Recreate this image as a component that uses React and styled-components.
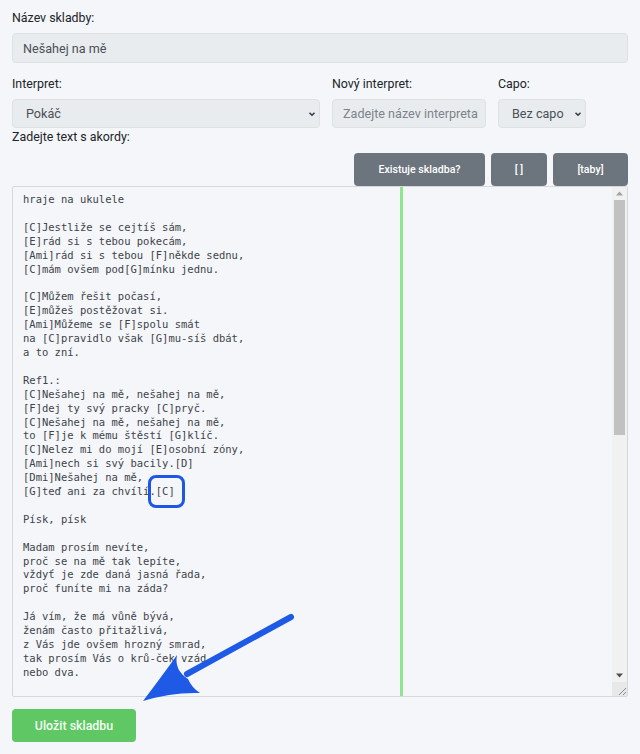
import React from "react";
import styled, { createGlobalStyle } from "styled-components";

const Global = createGlobalStyle`
  html, body { margin: 0; padding: 0; background: #f4f6fa; }
  body { font-family: Roboto, "Noto Sans", Arial, sans-serif; color: #212529; }
  * { box-sizing: border-box; }
`;

const Page = styled.div`
  position: relative;
  width: 640px;
  height: 754px;
  padding: 8px 12px 0 12px;
  overflow: hidden;
`;

const Label = styled.div`
  font-size: 12.4px;
  line-height: ${p => p.$lh || "19px"};
  color: #212529;
  margin-top: ${p => p.$mt || "0px"};
  margin-bottom: ${p => p.$mb || "0px"};
  white-space: nowrap;
`;

const Input = styled.div`
  height: ${p => p.$h || "30px"};
  width: ${p => p.$w || "100%"};
  background: #e9ecef;
  border: 1px solid #dde1e6;
  border-radius: 4px;
  padding: 0 10px;
  display: flex;
  align-items: center;
  font-size: 12.6px;
  color: ${p => (p.$placeholder ? "#7b838b" : "#495057")};
  white-space: nowrap;
  overflow: hidden;
`;

const Select = styled(Input)`
  justify-content: space-between;
  padding: 0 3px 0 13px;
`;

const Chevron = () => (
  <svg width="8" height="6" viewBox="0 0 8 6">
    <path d="M1.5 1.8 L4 4.3 L6.5 1.8" fill="none" stroke="#343a40" strokeWidth="1.5" />
  </svg>
);

const Row = styled.div`
  display: flex;
  gap: 12px;
  margin-top: 11px;
`;

const Field = styled.div`
  display: flex;
  flex-direction: column;
  width: ${p => p.$w};
`;

const Toolbar = styled.div`
  display: flex;
  justify-content: flex-end;
  gap: 6px;
  margin-top: 7px;
`;

const GrayButton = styled.div`
  height: 33px;
  width: ${p => p.$w};
  background: #6c757d;
  color: #fff;
  border-radius: 4px;
  display: flex;
  align-items: center;
  justify-content: center;
  font-size: 10.6px;
  font-weight: 500;
`;

const Editor = styled.div`
  display: flex;
  height: 511px;
  border: 1px solid #d5d9de;
  border-radius: 2px;
  background: #f4f6fa;
`;

const Content = styled.div`
  position: relative;
  flex: 1;
  overflow: hidden;
  padding: 6px 0 0 10px;
`;

const Lyrics = styled.pre`
  margin: 0;
  font-family: "DejaVu Sans Mono", "Liberation Mono", monospace;
  font-size: 10.5px;
  line-height: 13.9px;
  color: #3e4449;
`;

const Guide = styled.div`
  position: absolute;
  top: 0;
  bottom: 0;
  left: 387px;
  width: 3px;
  background: #90e690;
`;

const Mark = styled.span`
  position: relative;
  &::after {
    content: "";
    position: absolute;
    left: -8px;
    right: -10px;
    top: -10px;
    bottom: -11px;
    border: 3px solid #1d57e3;
    border-radius: 8px;
  }
`;

const ScrollCol = styled.div`
  width: 15px;
  display: flex;
  flex-direction: column;
  background: #f1f1f1;
`;

const ScrollBtn = styled.div`
  height: 13px;
  display: flex;
  align-items: center;
  justify-content: center;
`;

const Track = styled.div`
  flex: 1;
  padding: 0 2px;
  display: flex;
  flex-direction: column;
`;

const Thumb = styled.div`
  height: 235px;
  background: #c1c1c1;
`;

const Resizer = styled.div`
  height: 14px;
  background: #e8e8e8;
  display: flex;
  align-items: flex-end;
  justify-content: flex-end;
`;

const SaveButton = styled.div`
  margin-top: 12px;
  width: 124px;
  height: 33px;
  border-radius: 4px;
  background: #5fc764;
  color: #f3fff3;
  display: flex;
  align-items: center;
  justify-content: center;
  font-size: 12.4px;
  font-weight: 500;
`;

const Overlay = styled.svg`
  position: absolute;
  left: 0;
  top: 0;
  pointer-events: none;
`;

const before = `hraje na ukulele

[C]Jestliže se cejtíš sám,
[E]rád si s tebou pokecám,
[Ami]rád si s tebou [F]někde sednu,
[C]mám ovšem pod[G]mínku jednu.

[C]Můžem řešit počasí,
[E]můžeš postěžovat si.
[Ami]Můžeme se [F]spolu smát
na [C]pravidlo však [G]mu-síš dbát,
a to zní.

Ref1.:
[C]Nešahej na mě, nešahej na mě,
[F]dej ty svý pracky [C]pryč.
[C]Nešahej na mě, nešahej na mě,
to [F]je k mému štěstí [G]klíč.
[C]Nelez mi do mojí [E]osobní zóny,
[Ami]nech si svý bacily.[D]
[Dmi]Nešahej na mě,
[G]teď ani za chvílí.`;

const after = `

Písk, písk

Madam prosím nevíte,
proč se na mě tak lepíte,
vždyť je zde daná jasná řada,
proč funíte mi na záda?

Já vím, že má vůně bývá,
ženám často přitažlivá,
z Vás jde ovšem hrozný smrad,
tak prosím Vás o krů-ček vzád
nebo dva.

Ref1.:`;

export default function App() {
  return (
    <>
      <Global />
      <Page>
        <Label $mb="6px">Název skladby:</Label>
        <Input>Nešahej na mě</Input>
        <Row>
          <Field $w="308px">
            <Label $mb="6px">Interpret:</Label>
            <Select $h="29px">
              <span>Pokáč</span>
              <Chevron />
            </Select>
          </Field>
          <Field $w="154px">
            <Label $mb="6px">Nový interpret:</Label>
            <Input $h="29px" $placeholder>Zadejte název interpreta</Input>
          </Field>
          <Field $w="88px">
            <Label $mb="6px">Capo:</Label>
            <Select $h="29px">
              <span>Bez capo</span>
              <Chevron />
            </Select>
          </Field>
        </Row>
        <Label $lh="18px">Zadejte text s akordy:</Label>
        <Toolbar>
          <GrayButton $w="131px">Existuje skladba?</GrayButton>
          <GrayButton $w="56px">[ ]</GrayButton>
          <GrayButton $w="75px">[taby]</GrayButton>
        </Toolbar>
        <Editor>
          <Content>
            <Lyrics>
              {before}
              <Mark>[C]</Mark>
              {after}
            </Lyrics>
            <Guide />
          </Content>
          <ScrollCol>
            <ScrollBtn>
              <svg width="7" height="5" viewBox="0 0 7 5"><path d="M0 4.5 L3.5 0.5 L7 4.5 Z" fill="#a3a3a3" /></svg>
            </ScrollBtn>
            <Track>
              <Thumb />
            </Track>
            <ScrollBtn>
              <svg width="7" height="5" viewBox="0 0 7 5"><path d="M0 0.5 L3.5 4.5 L7 0.5 Z" fill="#505050" /></svg>
            </ScrollBtn>
            <Resizer>
              <svg width="12" height="12" viewBox="0 0 12 12">
                <path d="M11 4 L4 11 M11 8 L8 11" stroke="#8a8a8a" strokeWidth="1" />
              </svg>
            </Resizer>
          </ScrollCol>
        </Editor>
        <SaveButton>Uložit skladbu</SaveButton>
        <Overlay width="640" height="754" viewBox="0 0 640 754">
          <path d="M291 617 L187 674" stroke="#1e5ae6" strokeWidth="6" strokeLinecap="round" />
          <path d="M143 701 Q162 676 177 655 Q174 670 188 679 Q192 688 200 693 Q172 692 143 701 Z" fill="#1e5ae6" />
        </Overlay>
      </Page>
    </>
  );
}
